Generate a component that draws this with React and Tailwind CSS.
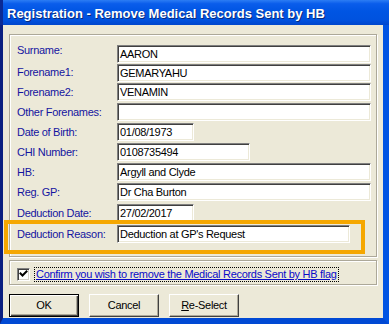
import React from "react";

const rows = [
  { label: "Surname:", value: "AARON", w: "w-[254px]", row: "h-[19px]", lab: "-mt-[4px]" },
  { label: "Forename1:", value: "GEMARYAHU", w: "w-[254px]", row: "h-[19px]", lab: "-mt-[1px]" },
  { label: "Forename2:", value: "VENAMIN", w: "w-[254px]", row: "h-[20px]", lab: "mt-0" },
  { label: "Other Forenames:", value: "", w: "w-[254px]", row: "h-[20px]", lab: "mt-0" },
  { label: "Date of Birth:", value: "01/08/1973", w: "w-[77px]", row: "h-[20px]", lab: "mt-0" },
  { label: "CHI Number:", value: "0108735494", w: "w-[133px]", row: "h-[20px]", lab: "mt-0" },
  { label: "HB:", value: "Argyll and Clyde", w: "w-[254px]", row: "h-[20px]", lab: "mt-0" },
  { label: "Reg. GP:", value: "Dr Cha Burton", w: "w-[254px]", row: "h-[21px]", lab: "mt-0" },
  { label: "Deduction Date:", value: "27/02/2017", w: "w-[77px]", row: "h-[21px]", lab: "mt-0" },
  { label: "Deduction Reason:", value: "Deduction at GP's Request", w: "w-[233px]", row: "h-[19px]", lab: "mt-0" },
];

function Field({ value, w }) {
  return (
    <div
      className={`${w} h-[18px] box-border border border-t-[#808080] border-l-[#808080] border-r-white border-b-white bg-white shadow-[inset_1px_1px_0_#404040,inset_-1px_-1px_0_#ECE9D8] pl-[2px] text-black leading-[16px] whitespace-nowrap overflow-hidden`}
    >
      {value}
    </div>
  );
}

function Button({ children, def }) {
  return def ? (
    <div className="w-[70px] h-[23px] box-border border border-black bg-[#ECE9D8] shadow-[inset_1px_1px_0_#fff,inset_-1px_-1px_0_#404040,inset_-2px_-2px_0_#ACA899] flex items-center justify-center text-black">
      {children}
    </div>
  ) : (
    <div className="w-[70px] h-[23px] box-border border border-t-white border-l-white border-r-[#404040] border-b-[#404040] bg-[#ECE9D8] shadow-[inset_-1px_-1px_0_#ACA899] flex items-center justify-center text-black">
      {children}
    </div>
  );
}

export default function App() {
  return (
    <div className="relative w-[389px] h-[324px] flex flex-col overflow-hidden font-['Liberation_Sans',Arial,sans-serif] text-[11px] tracking-[-0.3px]">
      {/* Title bar */}
      <div className="h-[25px] flex items-center pl-[4px] pt-[2px] bg-[linear-gradient(180deg,#2C7DF4_0%,#0A5DEB_15%,#0055E3_45%,#0052DF_80%,#0046CC_100%)] border-l-[3px] border-l-[#0A2A95]">
        <span className="text-white font-bold text-[13px] tracking-[0px] [text-shadow:1px_1px_0_#0A2A7A] whitespace-nowrap">
          Registration - Remove Medical Records Sent by HB
        </span>
      </div>

      {/* Body */}
      <div className="flex-1 flex flex-col bg-[#ECE9D8] border-l-[3px] border-l-[#0A1F80] border-r-[6px] border-r-[#0054E3] border-b-[6px] border-b-[#0049D4] pl-[6px] pr-[6px] pt-[9px]">
        {/* Group box 1 */}
        <div className="w-[368px] h-[223px] box-border border border-[#ACA899] shadow-[inset_1px_1px_0_#fff,1px_1px_0_#fff] pt-[10px] pl-[7px] flex flex-col">
          {rows.map((r) => (
            <div key={r.label} className={`${r.row} flex items-start`}>
              <div className={`w-[100px] ${r.lab} leading-[18px] text-[#1414A0] whitespace-nowrap`}>{r.label}</div>
              <Field value={r.value} w={r.w} />
            </div>
          ))}
        </div>

        {/* Group box 2 */}
        <div className="mt-[3px] w-[368px] h-[25px] box-border border border-[#ACA899] shadow-[inset_1px_1px_0_#fff,1px_1px_0_#fff] pl-[7px] pt-[7px] flex items-start">
          <div className="w-[13px] h-[13px] box-border border border-t-[#808080] border-l-[#808080] border-r-white border-b-white bg-white shadow-[inset_1px_1px_0_#404040,inset_-1px_-1px_0_#D4D0C8] flex items-center justify-center">
            <svg width="9" height="9" viewBox="0 0 9 9">
              <path d="M1.5 3.5 L3.5 5.5 L7.5 1.5" fill="none" stroke="#000" strokeWidth="2" strokeLinecap="square" />
            </svg>
          </div>
          <div className="ml-[4px] -mt-[1px] h-[15px] border border-dotted border-black px-[1px] leading-[13px] text-[#0A0AC8] underline whitespace-nowrap">
            Confirm you wish to remove the Medical Records Sent by HB flag
          </div>
        </div>

        {/* Buttons */}
        <div className="mt-[9px] flex gap-[10px]">
          <Button def>OK</Button>
          <Button>Cancel</Button>
          <Button>
            <span>
              <span className="underline">R</span>e-Select
            </span>
          </Button>
        </div>
      </div>

      {/* Orange annotation highlight */}
      <div className="absolute left-[4px] top-[220px] w-[361px] h-[34px] border-4 border-[#F5A700] pointer-events-none" />
    </div>
  );
}
